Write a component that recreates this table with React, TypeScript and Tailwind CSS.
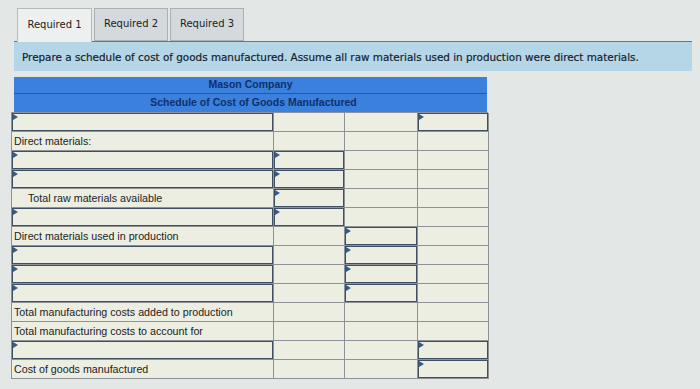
import React from "react";

type Cell = "" | "in";
interface Row {
  label?: string;
  indent?: boolean;
  cells: [Cell, Cell, Cell, Cell];
}

const rows: Row[] = [
  { cells: ["in", "", "", "in"] },
  { label: "Direct materials:", cells: ["", "", "", ""] },
  { cells: ["in", "in", "", ""] },
  { cells: ["in", "in", "", ""] },
  { label: "Total raw materials available", indent: true, cells: ["", "in", "", ""] },
  { cells: ["in", "in", "", ""] },
  { label: "Direct materials used in production", cells: ["", "", "in", ""] },
  { cells: ["in", "", "in", ""] },
  { cells: ["in", "", "in", ""] },
  { cells: ["in", "", "in", ""] },
  { label: "Total manufacturing costs added to production", cells: ["", "", "", ""] },
  { label: "Total manufacturing costs to account for", cells: ["", "", "", ""] },
  { cells: ["in", "", "", "in"] },
  { label: "Cost of goods manufactured", cells: ["", "", "", "in"] },
];

function InputBox() {
  return (
    <div className="relative h-full border-[1.5px] border-[#405062] bg-[#eceee2]">
      <svg className="absolute left-0 top-0" width="6" height="7" viewBox="0 0 6 7">
        <path d="M0 0 L5 3 L0 6 Z" fill="#2e5c8e" />
      </svg>
    </div>
  );
}

export default function App() {
  return (
    <div
      className="w-[700px] h-[389px] overflow-hidden bg-[#e3e7e6] text-[#222]"
      style={{ fontFamily: '"Liberation Sans", Arial, sans-serif' }}
    >
      <div className="flex gap-[2px] pl-[17px] pt-[8px]" style={{ fontFamily: '"DejaVu Sans", Verdana, sans-serif' }}>
        <div className="w-[75px] h-[34px] flex items-center justify-center pb-[3px] text-[10px] bg-[#eef0ef] border border-b-0 border-[#b4bbbf] -mb-px relative z-10">
          Required 1
        </div>
        <div className="w-[74px] h-[33px] flex items-center justify-center pb-[3px] text-[10px] bg-[#d3d9dc] border border-[#a9b1b6]">
          Required 2
        </div>
        <div className="w-[74px] h-[33px] flex items-center justify-center pb-[3px] text-[10px] bg-[#d3d9dc] border border-[#a9b1b6]">
          Required 3
        </div>
      </div>
      <div
        className="ml-[14px] w-[678px] h-[30px] border-t border-[#5f7888] bg-[#b5d6e6] flex items-center pl-[8px] pt-[2px] text-[10.4px] text-[#15222e] [-webkit-text-stroke:0.2px_#15222e]"
        style={{ fontFamily: '"DejaVu Sans", Verdana, sans-serif' }}
      >
        Prepare a schedule of cost of goods manufactured. Assume all raw materials used in production were direct materials.
      </div>
      <div className="ml-[14px] mt-[6px] w-[473px] bg-[#3a80dc] text-[#10306b] font-bold text-[10.5px]">
        <div className="h-[17px] flex items-center justify-center border-b border-[#2a5a9c]">Mason Company</div>
        <div className="h-[18px] flex items-center justify-center pl-[6px]">Schedule of Cost of Goods Manufactured</div>
      </div>
      <div className="ml-[11px] w-[477px] border-l border-t border-[#8c9297] bg-[#eceee2] grid grid-cols-[262px_71px_73px_71px]">
        {rows.map((r, i) => (
          <React.Fragment key={i}>
            <div className="h-[19px] border-r border-b border-[#8c9297]">
              {r.cells[0] === "in" ? (
                <InputBox />
              ) : (
                <div className={`h-full flex items-center text-[10.7px] ${r.indent ? "pl-[16px]" : "pl-[2px]"}`}>{r.label}</div>
              )}
            </div>
            {r.cells.slice(1).map((c, j) => (
              <div key={j} className="h-[19px] border-r border-b border-[#8c9297]">
                {c === "in" ? <InputBox /> : null}
              </div>
            ))}
          </React.Fragment>
        ))}
      </div>
    </div>
  );
}
